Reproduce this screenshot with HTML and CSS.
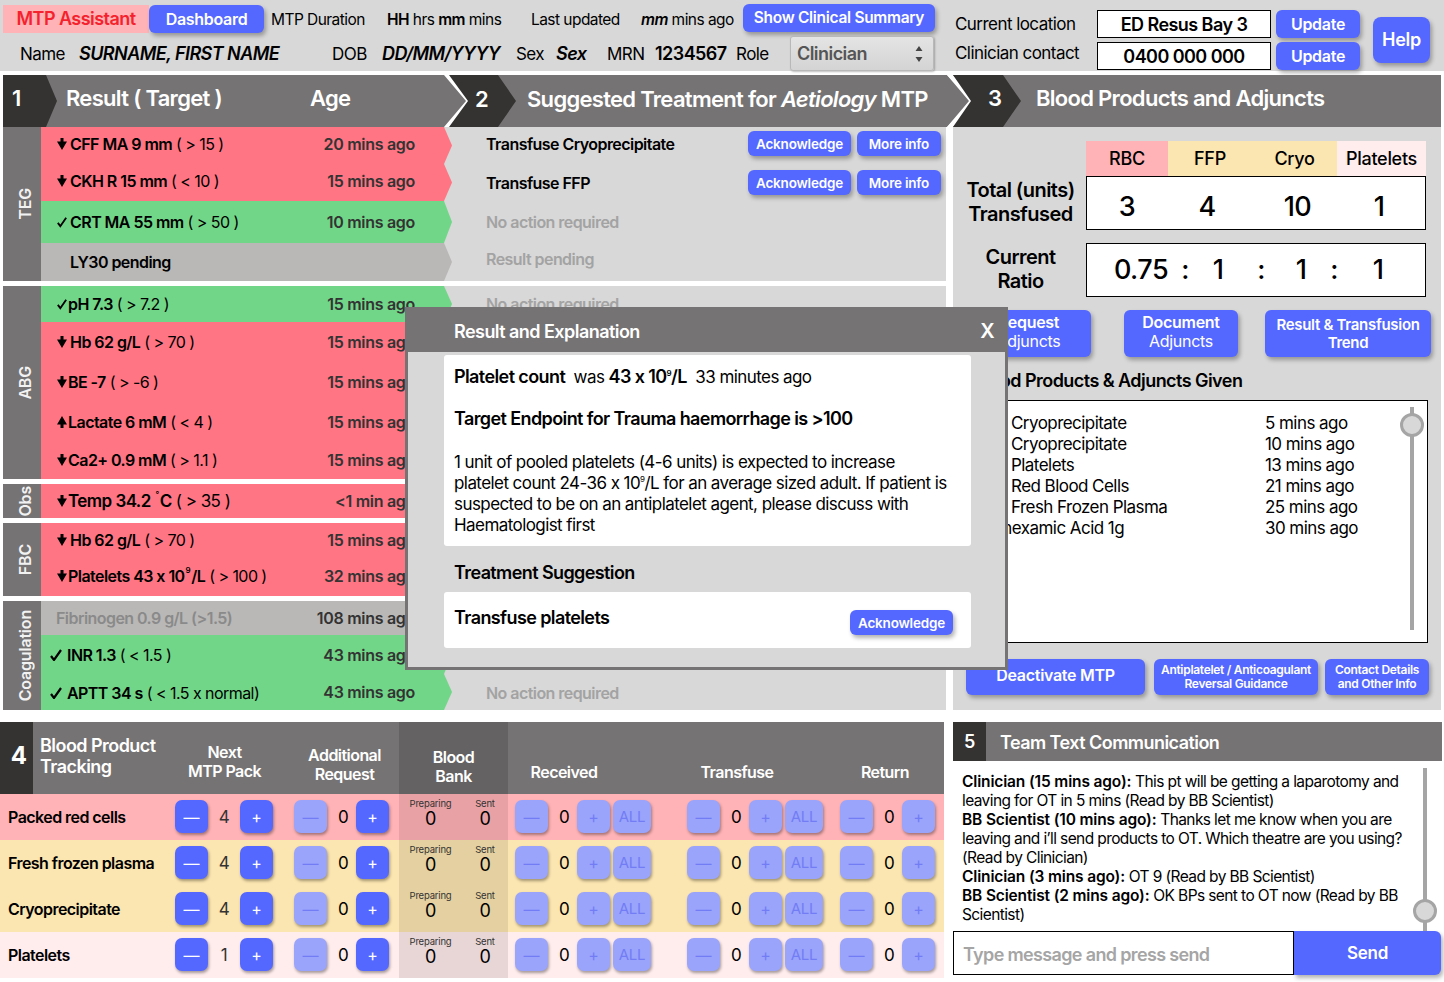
FILE: index.html
```html
<!DOCTYPE html>
<html>
  <head>
    <meta charset="utf-8" />
    <title>MTP Assistant</title>
    <link rel="stylesheet" href="styles.css">
  </head>
  <body>
    <svg class="defs" width="0" height="0">
      <symbol id="dn" viewBox="0 0 10 12"><path d="M3.500 0h3v3.500H10L5 12 0 3.500h3.500z" /></symbol>
      <symbol id="up" viewBox="0 0 10 12"><path d="M3.500 12h3V8.500H10L5 0 0 8.500h3.500z" /></symbol>
      <symbol id="ok" viewBox="0 0 12 12"><path d="M1 7l3 4 7-10" fill="none" stroke="#000" stroke-width="2.200" /></symbol>
    </svg>

    <div class="top">
      <div class="top-left">
        <div class="top-a">
          <div class="app-name">MTP Assistant</div>
          <div class="btn dash">Dashboard</div>
          <span>MTP Duration</span>
          <span><b>HH</b> hrs <b>mm</b> mins</span>
          <span>Last updated</span>
          <span><b><i>mm</i></b> mins ago</span>
          <div class="btn summary">Show Clinical Summary</div>
        </div>
        <div class="top-b">
          <span>Name</span>
          <b><i>SURNAME, FIRST NAME</i></b>
          <span>DOB</span>
          <b><i>DD/MM/YYYY</i></b>
          <span>Sex</span>
          <b><i>Sex</i></b>
          <span>MRN</span>
          <b>1234567</b>
          <span>Role</span>
          <div class="select">
            Clinician
            <svg width="8" height="18" viewBox="0 0 8 18"><path d="M4 1l3.500 5h-7zM4 17l3.500-5h-7z" fill="#444" /></svg>
          </div>
        </div>
      </div>
      <div class="top-right">
        <span>Current location</span>
        <div class="field">ED Resus Bay 3</div>
        <div class="btn upd">Update</div>
        <span class="contact">Clinician contact</span>
        <div class="field">0400 000 000</div>
        <div class="btn upd">Update</div>
        <div class="btn help">Help</div>
      </div>
    </div>

    <div class="main-head">
      <svg class="head-bg" width="1444" height="52">
        <rect x="3" width="470" height="52" fill="#767374" />
        <polygon points="450,0 947,0 971,26 947,52 450,52 468,26" fill="#767374" />
        <polygon points="953,0 1441,0 1441,52 953,52" fill="#767374" />
        <polygon points="3,0 46,0 57,26 46,52 3,52" fill="#343332" />
        <polygon points="444,0 466,26 444,52 450,52 472,26 450,0" fill="#fff" />
        <polygon points="449,0 498,0 516,26 498,52 449,52 468,26" fill="#343332" />
        <polygon points="947,0 969,26 947,52 953,52 975,26 953,0" fill="#fff" />
        <polygon points="953,0 1003,0 1021,26 1003,52 953,52 971,26" fill="#343332" />
      </svg>
      <span class="n n1">1</span>
      <span class="h h-res">Result ( Target )</span>
      <span class="h h-age">Age</span>
      <span class="n n2">2</span>
      <span class="h h-sug">Suggested Treatment for <i>Aetiology</i> MTP</span>
      <span class="n n3">3</span>
      <span class="h h-blood">Blood Products and Adjuncts</span>
    </div>

    <div class="main">
      <section class="results">
        <div class="group teg">
          <div class="side"><span>TEG</span></div>
          <div class="rows">
            <div class="row h37 red lift lift-act">
              <div class="res"><div class="name"><svg class="ar"><use href="#dn" /></svg><b>CFF MA 9 mm</b>&nbsp;( &gt; 15 )</div><div class="age">20 mins ago</div></div>
              <div class="act"><b>Transfuse Cryoprecipitate</b><div class="btn ack">Acknowledge</div><div class="btn more">More info</div></div>
            </div>
            <div class="row h37 red lift">
              <div class="res"><div class="name"><svg class="ar"><use href="#dn" /></svg><b>CKH R 15 mm</b>&nbsp;( &lt; 10 )</div><div class="age">15 mins ago</div></div>
              <div class="act"><b>Transfuse FFP</b><div class="btn ack">Acknowledge</div><div class="btn more">More info</div></div>
            </div>
            <div class="row h42 green">
              <div class="res"><div class="name"><svg class="ar"><use href="#ok" /></svg><b>CRT MA 55 mm</b>&nbsp;( &gt; 50 )</div><div class="age">10 mins ago</div></div>
              <div class="act none">No action required</div>
            </div>
            <div class="row h38 grey">
              <div class="res"><div class="name"><span class="ar"></span><b>LY30 pending</b></div></div>
              <div class="act none pend">Result pending</div>
            </div>
          </div>
        </div>

        <div class="group abg">
          <div class="side"><span>ABG</span></div>
          <div class="rows">
            <div class="row h36 green">
              <div class="res"><div class="name tight"><svg class="ar"><use href="#ok" /></svg><b>pH 7.3</b>&nbsp;( &gt; 7.2 )</div><div class="age">15 mins ago</div></div>
              <div class="act none">No action required</div>
            </div>
            <div class="row h39 red">
              <div class="res"><div class="name"><svg class="ar"><use href="#dn" /></svg><b>Hb 62 g/L</b>&nbsp;( &gt; 70 )</div><div class="age">15 mins ago</div></div>
              <div class="act"></div>
            </div>
            <div class="row h41 red">
              <div class="res"><div class="name tight"><svg class="ar"><use href="#dn" /></svg><b>BE -7</b>&nbsp;( &gt; -6 )</div><div class="age">15 mins ago</div></div>
              <div class="act"></div>
            </div>
            <div class="row h39 red">
              <div class="res"><div class="name tight"><svg class="ar"><use href="#up" /></svg><b>Lactate 6 mM</b>&nbsp;( &lt; 4 )</div><div class="age">15 mins ago</div></div>
              <div class="act"></div>
            </div>
            <div class="row h38 red">
              <div class="res"><div class="name tight"><svg class="ar"><use href="#dn" /></svg><b>Ca2+ 0.9 mM</b>&nbsp;( &gt; 1.1 )</div><div class="age">15 mins ago</div></div>
              <div class="act"></div>
            </div>
          </div>
        </div>

        <div class="group obs">
          <div class="side"><span>Obs</span></div>
          <div class="rows">
            <div class="row h34 red big">
              <div class="res"><div class="name tight"><svg class="ar"><use href="#dn" /></svg><b>Temp 34.2 <sup>°</sup>C</b>&nbsp;( &gt; 35 )</div><div class="age">&lt;1 min ago</div></div>
              <div class="act"></div>
            </div>
          </div>
        </div>

        <div class="group fbc">
          <div class="side"><span>FBC</span></div>
          <div class="rows">
            <div class="row h33 red">
              <div class="res"><div class="name"><svg class="ar"><use href="#dn" /></svg><b>Hb 62 g/L</b>&nbsp;( &gt; 70 )</div><div class="age">15 mins ago</div></div>
              <div class="act"></div>
            </div>
            <div class="row h40 red">
              <div class="res"><div class="name tight"><svg class="ar"><use href="#dn" /></svg><b>Platelets 43 x 10<sup>9</sup>/L</b>&nbsp;( &gt; 100 )</div><div class="age">32 mins ago</div></div>
              <div class="act"></div>
            </div>
          </div>
        </div>

        <div class="group coag">
          <div class="side"><span>Coagulation</span></div>
          <div class="rows">
            <div class="row h34 grey">
              <div class="res"><div class="name fib"><b>Fibrinogen 0.9 g/L (&gt;1.5)</b></div><div class="age">108 mins ago</div></div>
              <div class="act"></div>
            </div>
            <div class="row h39 green">
              <div class="res"><div class="name wide"><svg class="ar"><use href="#ok" /></svg><b>INR 1.3</b>&nbsp;( &lt; 1.5 )</div><div class="age">43 mins ago</div></div>
              <div class="act"></div>
            </div>
            <div class="row h36 green drop">
              <div class="res"><div class="name wide"><svg class="ar"><use href="#ok" /></svg><b>APTT 34 s</b>&nbsp;( &lt; 1.5 x normal)</div><div class="age">43 mins ago</div></div>
              <div class="act none">No action required</div>
            </div>
          </div>
        </div>
      </section>

      <section class="blood">
        <div class="totals">
          <div></div>
          <div class="keys"><div class="k-rbc">RBC</div><div class="k-ffp">FFP</div><div class="k-cryo">Cryo</div><div class="k-plt">Platelets</div></div>
          <div class="tot-label">Total (units)<br />Transfused</div>
          <div class="box vals"><span>3</span><span>4</span><span>10</span><span>1</span></div>
          <div class="tot-label gap">Current<br />Ratio</div>
          <div class="box ratio gap"><span>0.75</span><span>:</span><span>1</span><span>:</span><span>1</span><span>:</span><span>1</span></div>
        </div>

        <div class="three">
          <div class="btn b-req"><b>Request</b>Adjuncts</div>
          <div class="btn b-doc"><b>Document</b>Adjuncts</div>
          <div class="btn b-res">Result &amp; Transfusion<br />Trend</div>
        </div>

        <h4 class="given">Blood Products &amp; Adjuncts Given</h4>
        <div class="given-box">
          <div class="given-row"><span>Cryoprecipitate</span><span>5 mins ago</span></div>
          <div class="given-row"><span>Cryoprecipitate</span><span>10 mins ago</span></div>
          <div class="given-row"><span>Platelets</span><span>13 mins ago</span></div>
          <div class="given-row"><span>Red Blood Cells</span><span>21 mins ago</span></div>
          <div class="given-row"><span>Fresh Frozen Plasma</span><span>25 mins ago</span></div>
          <div class="given-row tx"><span>Tranexamic Acid 1g</span><span>30 mins ago</span></div>
          <div class="slider s-given"><i></i></div>
        </div>

        <div class="foot">
          <div class="btn b-off">Deactivate MTP</div>
          <div class="btn b-anti">Antiplatelet / Anticoagulant<br />Reversal Guidance</div>
          <div class="btn b-con">Contact Details<br />and Other Info</div>
        </div>
      </section>
    </div>

    <div class="lower">
      <section class="track">
        <div class="t-head t-grid">
          <div class="t-title"><span class="t-num">4</span><span>Blood Product<br />Tracking</span></div>
          <div class="t-h up1">Next<br />MTP Pack</div>
          <div class="t-h up2">Additional<br />Request</div>
          <div class="t-h bb">Blood<br />Bank</div>
          <div class="t-h low">Received</div>
          <div class="t-h low">Transfuse</div>
          <div class="t-h low">Return</div>
        </div>

        <div class="t-row t-grid c-red">
          <div class="prod">Packed red cells</div>
          <div class="ctl w32"><div class="sq">—</div><span>4</span><div class="sq">+</div></div>
          <div class="ctl"><div class="sq off">—</div><span>0</span><div class="sq">+</div></div>
          <div class="bank"><div><small>Preparing</small>0</div><div><small>Sent</small>0</div></div>
          <div class="ctl rec"><div class="sq off">—</div><span>0</span><div class="sq off">+</div><div class="sq off all">ALL</div></div>
          <div class="ctl"><div class="sq off">—</div><span>0</span><div class="sq off">+</div><div class="sq off all">ALL</div></div>
          <div class="ctl"><div class="sq off">—</div><span>0</span><div class="sq off">+</div></div>
        </div>
        <div class="t-row t-grid c-yel">
          <div class="prod">Fresh frozen plasma</div>
          <div class="ctl w32"><div class="sq">—</div><span>4</span><div class="sq">+</div></div>
          <div class="ctl"><div class="sq off">—</div><span>0</span><div class="sq">+</div></div>
          <div class="bank"><div><small>Preparing</small>0</div><div><small>Sent</small>0</div></div>
          <div class="ctl rec"><div class="sq off">—</div><span>0</span><div class="sq off">+</div><div class="sq off all">ALL</div></div>
          <div class="ctl"><div class="sq off">—</div><span>0</span><div class="sq off">+</div><div class="sq off all">ALL</div></div>
          <div class="ctl"><div class="sq off">—</div><span>0</span><div class="sq off">+</div></div>
        </div>
        <div class="t-row t-grid c-yel">
          <div class="prod">Cryoprecipitate</div>
          <div class="ctl w32"><div class="sq">—</div><span>4</span><div class="sq">+</div></div>
          <div class="ctl"><div class="sq off">—</div><span>0</span><div class="sq">+</div></div>
          <div class="bank"><div><small>Preparing</small>0</div><div><small>Sent</small>0</div></div>
          <div class="ctl rec"><div class="sq off">—</div><span>0</span><div class="sq off">+</div><div class="sq off all">ALL</div></div>
          <div class="ctl"><div class="sq off">—</div><span>0</span><div class="sq off">+</div><div class="sq off all">ALL</div></div>
          <div class="ctl"><div class="sq off">—</div><span>0</span><div class="sq off">+</div></div>
        </div>
        <div class="t-row t-grid c-pale">
          <div class="prod">Platelets</div>
          <div class="ctl w32"><div class="sq">—</div><span>1</span><div class="sq">+</div></div>
          <div class="ctl"><div class="sq off">—</div><span>0</span><div class="sq">+</div></div>
          <div class="bank"><div><small>Preparing</small>0</div><div><small>Sent</small>0</div></div>
          <div class="ctl rec"><div class="sq off">—</div><span>0</span><div class="sq off">+</div><div class="sq off all">ALL</div></div>
          <div class="ctl"><div class="sq off">—</div><span>0</span><div class="sq off">+</div><div class="sq off all">ALL</div></div>
          <div class="ctl"><div class="sq off">—</div><span>0</span><div class="sq off">+</div></div>
        </div>
      </section>

      <section class="chat">
        <div class="c-head"><span class="c-num">5</span><span>Team Text Communication</span></div>
        <div class="c-body">
          <p><b>Clinician (15 mins ago):</b> This pt will be getting a laparotomy and leaving for OT in 5 mins (Read by BB Scientist)</p>
          <p><b>BB Scientist (10 mins ago):</b> Thanks let me know when you are leaving and i’ll send products to OT. Which theatre are you using? (Read by Clinician)</p>
          <p><b>Clinician (3 mins ago):</b> OT 9 (Read by BB Scientist)</p>
          <p><b>BB Scientist (2 mins ago):</b> OK BPs sent to OT now (Read by BB Scientist)</p>
          <div class="slider s-chat"><i></i></div>
        </div>
        <div class="c-send">
          <div class="c-input">Type message and press send</div>
          <div class="btn c-btn">Send</div>
        </div>
      </section>
    </div>

    <div class="modal">
      <div class="m-head"><span>Result and Explanation</span><span class="m-x">X</span></div>
      <div class="m-card m-one">
        <p><b>Platelet count</b>&nbsp; was <b>43 x 10<sup>9</sup>/L</b>&nbsp; 33 minutes ago</p>
        <p class="m-target"><b>Target Endpoint for Trauma haemorrhage is &gt;100</b></p>
        <p class="m-text">1 unit of pooled platelets (4-6 units) is expected to increase platelet count 24-36 x 10<sup>9</sup>/L for an average sized adult. If patient is suspected to be on an antiplatelet agent, please discuss with Haematologist first</p>
      </div>
      <h4 class="m-sub">Treatment Suggestion</h4>
      <div class="m-card m-two">
        <b>Transfuse platelets</b>
        <div class="btn ack m-ack">Acknowledge</div>
      </div>
    </div>
  </body>
</html>
```

FILE: styles.css
```css
* {
  box-sizing: border-box;
}

html,
body {
  margin: 0;
  height: 982px;
  overflow: hidden;
}

body {
  position: relative;
  background: #fff;
  color: #000;
  font-family: Inter, "Liberation Sans", sans-serif;
  font-size: 16px;
  letter-spacing: -0.55px;
}

b,
h4 {
  font-weight: 600;
}

.defs {
  position: absolute;
}

.btn {
  display: flex;
  align-items: center;
  justify-content: center;
  background: #5468ff;
  color: #fff;
  font-weight: 600;
  letter-spacing: -0.3px;
  border-radius: 6px;
  box-shadow: 2px 3px 4px rgba(0, 0, 0, 0.3);
  text-align: center;
}

/* top bar */
.top {
  display: flex;
  height: 71px;
  margin-bottom: 4px;
  background: #d8d8d8;
}

.top-left {
  width: 936px;
}

.top-a {
  display: grid;
  grid-template-columns: 146px 115px 116px 144px 110px 109px 192px;
  align-items: center;
  height: 36px;
  padding: 5px 0 3px 3px;
  white-space: nowrap;
}

.top-a > span {
  padding-left: 7px;
  font-size: 15.500px;
}

.app-name {
  display: flex;
  align-items: center;
  justify-content: center;
  height: 28px;
  margin-top: -1px;
  background: #ffb3b6;
  color: #f5222d;
  font-size: 18px;
  font-weight: 600;
}

.dash {
  height: 28px;
  margin-top: -1px;
  font-size: 16px;
}

.summary {
  height: 28px;
  margin-top: -3px;
  font-size: 15.500px;
}

.top-b {
  display: grid;
  grid-template-columns: 59px 253px 50px 134px 40px 51px 48px 81px 54px 144px;
  align-items: center;
  height: 35px;
  padding-left: 20px;
  font-size: 18px;
  white-space: nowrap;
}

.top-b > span {
  font-size: 17px;
}

.select {
  display: flex;
  align-items: center;
  justify-content: space-between;
  height: 35px;
  padding: 0 10px 0 6px;
  border: 1px solid #b8b8b8;
  border-radius: 3px;
  background: linear-gradient(#e4e4e4, #d4d4d4);
  box-shadow: 1px 1px 2px rgba(0, 0, 0, 0.25);
  color: #555;
  font-weight: 600;
}

.top-right {
  display: grid;
  grid-template-columns: 142px 174px 89px 70px;
  grid-template-rows: 28px 28px;
  row-gap: 4px;
  align-items: center;
  padding: 10px 0 0 19px;
  font-size: 17px;
  white-space: nowrap;
}

.contact {
  margin-top: -6px;
}

.field {
  display: flex;
  align-items: center;
  justify-content: center;
  height: 28px;
  border: 1px solid #000;
  background: #fff;
  font-size: 18px;
  font-weight: 600;
}

.upd {
  width: 84px;
  height: 28px;
  margin-left: 5px;
  font-size: 16px;
}

.help {
  grid-column: 4;
  grid-row: 1 / 3;
  width: 57px;
  height: 46px;
  margin: -1px 0 0 13px;
  font-size: 18px;
  border-radius: 8px;
}

/* step header */
.main-head {
  position: relative;
  height: 52px;
  color: #fff;
  font-weight: 600;
}

.head-bg {
  display: block;
}

.n,
.h {
  position: absolute;
  top: -2px;
  font-size: 22px;
  line-height: 52px;
  letter-spacing: -0.7px;
  white-space: nowrap;
}

.n1 { left: 12px; top: -3px; }
.n2 { left: 475px; }
.n3 { left: 988px; top: -3px; }
.h-res { left: 66px; top: -3px; }
.h-age { left: 310px; top: -3px; }
.h-sug { left: 527px; }
.h-blood { left: 1036px; top: -3px; }

/* sections 1 and 2 */
.main {
  display: flex;
  gap: 7px;
  height: 583px;
  padding-left: 3px;
}

.results {
  display: flex;
  flex-direction: column;
  justify-content: space-between;
  width: 943px;
}

.group {
  display: flex;
}

.teg { height: 154px; }
.abg { height: 193px; }
.obs { height: 34px; }
.fbc { height: 73px; }
.coag { height: 109px; }

.side {
  display: flex;
  align-items: center;
  justify-content: center;
  width: 38px;
  padding-left: 5px;
  background: #767374;
  color: #f2f2f2;
  font-weight: 600;
  letter-spacing: -0.2px;
}

.side span {
  writing-mode: vertical-rl;
  transform: rotate(180deg);
}

.rows {
  flex: 1;
}

.row {
  display: flex;
  background: #d8d8d8;
}

.h33 { height: 33px; }
.h34 { height: 34px; }
.h36 { height: 36px; }
.h37 { height: 37px; }
.h38 { height: 38px; }
.h39 { height: 39px; }
.h40 { height: 40px; }
.h41 { height: 41px; }
.h42 { height: 42px; }

.res {
  display: flex;
  align-items: center;
  width: 411px;
  clip-path: polygon(0 0, 403px 0, 100% 50%, 403px 100%, 0 100%);
}

.lift .name,
.lift .age,
.lift-act .act {
  position: relative;
  top: -2px;
}

.drop .name,
.drop .act {
  position: relative;
  top: 1px;
}

.red .res { background: #ff7583; }
.green .res { background: #71d688; }
.grey .res { background: #b9b8b6; }

.name {
  display: flex;
  align-items: center;
  flex: 1;
  padding-left: 16px;
  white-space: nowrap;
}

.name sup {
  position: relative;
  top: -3px;
  margin: 0 1px;
  font-size: 8px;
  line-height: 0;
}

.modal sup {
  font-size: 8px;
  line-height: 0;
}

.wide {
  padding-left: 9px;
}

.fib {
  padding-left: 15px;
  color: #8a8a8a;
}

.ar {
  flex: none;
  width: 10px;
  height: 12px;
  margin-right: 3px;
}

.tight .ar {
  margin-right: 1px;
}

.wide .ar {
  width: 12px;
  margin-right: 5px;
}

.big {
  font-size: 17px;
}

.big .age {
  font-size: 16px;
}

.age {
  width: 100px;
  margin-right: 37px;
  color: #333;
  font-weight: 600;
  letter-spacing: -0.3px;
  text-align: right;
  white-space: nowrap;
}

.act {
  display: flex;
  flex: 1;
  align-items: center;
  padding: 0 5px 0 34px;
}

.act .ack {
  margin-left: auto;
}

.none {
  color: #a3a3a3;
  font-weight: 600;
}

.pend {
  padding-bottom: 7px;
}

.ack {
  width: 103px;
  height: 25px;
  font-size: 13.500px;
  letter-spacing: -0.2px;
}

.more {
  width: 84px;
  height: 25px;
  margin-left: 6px;
  font-size: 13.500px;
  letter-spacing: -0.2px;
}

/* section 3 */
.blood {
  display: flex;
  flex-direction: column;
  width: 488px;
  padding: 14px 0 0 13px;
  background: #d8d8d8;
}

.totals {
  display: grid;
  grid-template-columns: 120px 340px;
  grid-template-rows: 35px 54px 67px;
}

.keys {
  display: grid;
  grid-template-columns: 82px 84px 85px 89px;
  font-size: 18px;
  font-weight: 500;
  letter-spacing: -0.3px;
  text-align: center;
  line-height: 35px;
}

.k-rbc { background: #ffb3b6; }
.k-ffp,
.k-cryo { background: #fbe5b0; }
.k-plt { background: #ffecec; }

.tot-label {
  padding-top: 2px;
  margin-left: -11px;
  font-size: 20px;
  font-weight: 600;
  line-height: 24px;
  text-align: center;
}

.gap {
  margin-top: 13px;
}

.box {
  display: grid;
  align-items: center;
  height: 54px;
  border: 1px solid #000;
  background: #fff;
  font-size: 27px;
  font-weight: 500;
  text-align: center;
}

.vals {
  grid-template-columns: 80px 80px 101px 62px;
  padding-top: 7px;
}

.ratio {
  grid-template-columns: 60px 28px 38px 48px 32px 34px 54px;
  padding: 0 0 2px 24px;
}

.three {
  display: flex;
  margin-top: 13px;
}

.three .btn {
  flex-direction: column;
  height: 47px;
  padding-bottom: 3px;
  font-size: 16px;
  line-height: 19px;
}

.three b {
  font-weight: 600;
}

.b-req,
.b-doc {
  font-weight: 400 !important;
}

.b-req { width: 125px; }
.b-doc { width: 114px; margin-left: 33px; }
.b-res { width: 166px; margin-left: 27px; padding-bottom: 0 !important; font-size: 15px !important; line-height: 18px !important; }

.given {
  margin: 12px 0 7px 8px;
  font-size: 18px;
  letter-spacing: -0.55px;
  line-height: 24px;
}

.given-box {
  position: relative;
  width: 462px;
  height: 243px;
  padding-top: 12px;
  border: 1px solid #000;
  background: #fff;
  font-size: 17px;
  line-height: 21px;
}

.given-row {
  display: grid;
  grid-template-columns: 254px 1fr;
  padding-left: 44px;
}

.tx {
  grid-template-columns: 287px 1fr;
  padding-left: 11px;
}

.slider {
  position: absolute;
  width: 4px;
  background: #a5a5a5;
}

.slider i {
  position: absolute;
  left: -10px;
  width: 24px;
  height: 24px;
  border: 3px solid #a5a5a5;
  border-radius: 50%;
  background: #d8d8d8;
}

.s-given {
  top: 6px;
  left: 443px;
  height: 223px;
}

.s-given i {
  top: 6px;
}

.foot {
  display: flex;
  margin-top: 16px;
}

.foot .btn {
  height: 36px;
  line-height: 14px;
}

.b-off { width: 179px; padding-bottom: 4px; font-size: 16px; }
.b-anti { width: 164px; margin-left: 9px; font-size: 12px; }
.b-con { width: 104px; margin-left: 7px; font-size: 12px; }

/* section 4 */
.lower {
  display: flex;
  gap: 9px;
  margin-top: 12px;
}

.track {
  width: 944px;
}

.t-grid {
  display: grid;
  grid-template-columns: 175px 119px 105px 109px 179px 153px 104px;
}

.t-head {
  height: 72px;
  background: #767374;
  color: #fff;
  font-weight: 600;
  line-height: 19px;
}

.t-title {
  display: flex;
  font-size: 18px;
  line-height: 21px;
  white-space: nowrap;
}

.t-num {
  flex: none;
  width: 33px;
  margin-right: 7px;
  padding-left: 4px;
  background: #343332;
  font-size: 24px;
  font-weight: 700;
  line-height: 68px;
  text-align: center;
}

.t-title span + span {
  padding-top: 13px;
}

.t-h {
  text-align: center;
}

.up1 { padding: 21px 20px 0 0; }
.up2 { padding: 24px 4px 0 0; }
.bb { padding-top: 26px; background: #646263; }
.low { padding-top: 41px; }
.low:nth-child(5) { padding-right: 67px; }
.low:nth-child(6) { padding-right: 53px; }
.low:nth-child(7) { padding-right: 14px; }

.t-row {
  align-items: center;
  height: 46px;
}

.c-red { background: #ffb3b6; }
.c-yel { background: #fbe5b0; }
.c-pale { background: #ffecec; }

.prod {
  padding-left: 8px;
  font-weight: 600;
  white-space: nowrap;
}

.ctl {
  display: flex;
  align-items: center;
}

.ctl > span {
  width: 29px;
  padding-left: 3px;
  font-size: 17px;
  text-align: center;
}

.w32 > span {
  width: 32px;
  padding-left: 0;
  color: #333;
}

.rec {
  padding-left: 7px;
}

.sq {
  display: flex;
  align-items: center;
  justify-content: center;
  flex: none;
  width: 33px;
  height: 33px;
  margin-top: -1px;
  border-radius: 7px;
  background: #5468ff;
  box-shadow: 1px 2px 3px rgba(0, 0, 0, 0.35);
  color: #fff;
  font-size: 16px;
  letter-spacing: 0;
}

.off {
  background: #9aa4fb;
  color: #727df5;
}

.all {
  width: 38px;
  margin-left: 3px;
  font-size: 15px;
  letter-spacing: -0.3px;
}

.bank {
  display: grid;
  grid-template-columns: 63px 46px;
  align-self: stretch;
  padding-top: 4px;
  background: rgba(0, 0, 0, 0.09);
  font-size: 18px;
  line-height: 17px;
  text-align: center;
}

.bank small {
  display: block;
  font-size: 9.500px;
  line-height: 12px;
  letter-spacing: -0.2px;
  color: #333;
}

/* section 5 */
.chat {
  width: 489px;
}

.c-head {
  display: flex;
  align-items: center;
  height: 39px;
  padding-top: 2px;
  background: #767374;
  color: #fff;
  font-size: 18px;
  font-weight: 600;
}

.c-num {
  width: 33px;
  margin: -2px 14px 0 0;
  background: #343332;
  line-height: 39px;
  text-align: center;
}

.c-body {
  position: relative;
  height: 170px;
  padding: 11px 37px 0 9px;
  font-size: 15.500px;
  letter-spacing: -0.6px;
  line-height: 19px;
}

.c-body p {
  margin: 0;
}

.c-body b {
  letter-spacing: -0.15px;
}

.s-chat {
  top: 7px;
  left: 470px;
  height: 163px;
}

.s-chat i {
  top: 131px;
}

.c-send {
  display: flex;
  width: 488px;
}

.c-input {
  width: 341px;
  height: 44px;
  padding-left: 9px;
  border: 1px solid #000;
  color: #a5a5a5;
  font-size: 18px;
  font-weight: 600;
  letter-spacing: -0.65px;
  line-height: 46px;
}

.c-btn {
  width: 147px;
  height: 44px;
  font-size: 17px;
  border-radius: 0 6px 6px 0;
}

/* result dialog */
.modal {
  position: absolute;
  top: 307px;
  left: 405px;
  width: 603px;
  height: 363px;
  border: 3px solid #767374;
  background: #d8d8d8;
}

.m-head {
  display: flex;
  align-items: center;
  justify-content: space-between;
  height: 42px;
  margin-bottom: 3px;
  padding: 0 11px 0 46px;
  background: #767374;
  color: #fff;
  font-size: 18px;
  font-weight: 600;
}

.m-x {
  font-size: 20px;
}

.m-card {
  width: 527px;
  margin-left: 36px;
  padding-left: 10px;
  border-radius: 3px;
  background: #fff;
  font-size: 17px;
  letter-spacing: -0.57px;
}

.m-card b {
  font-size: 18px;
  letter-spacing: -0.6px;
}

.m-one {
  height: 191px;
  padding-top: 11px;
}

.m-card p {
  margin: 0;
  line-height: 21px;
}

.m-target {
  margin-top: 20px !important;
}

.m-text {
  margin-top: 22px !important;
  padding-right: 22px;
}

.m-sub {
  margin: 15px 0 7px 46px;
  font-size: 18px;
  letter-spacing: -0.6px;
  line-height: 24px;
}

.m-two {
  display: flex;
  justify-content: space-between;
  height: 56px;
  padding: 15px 18px 0 10px;
}

.m-ack {
  margin-top: 3px;
}
```
